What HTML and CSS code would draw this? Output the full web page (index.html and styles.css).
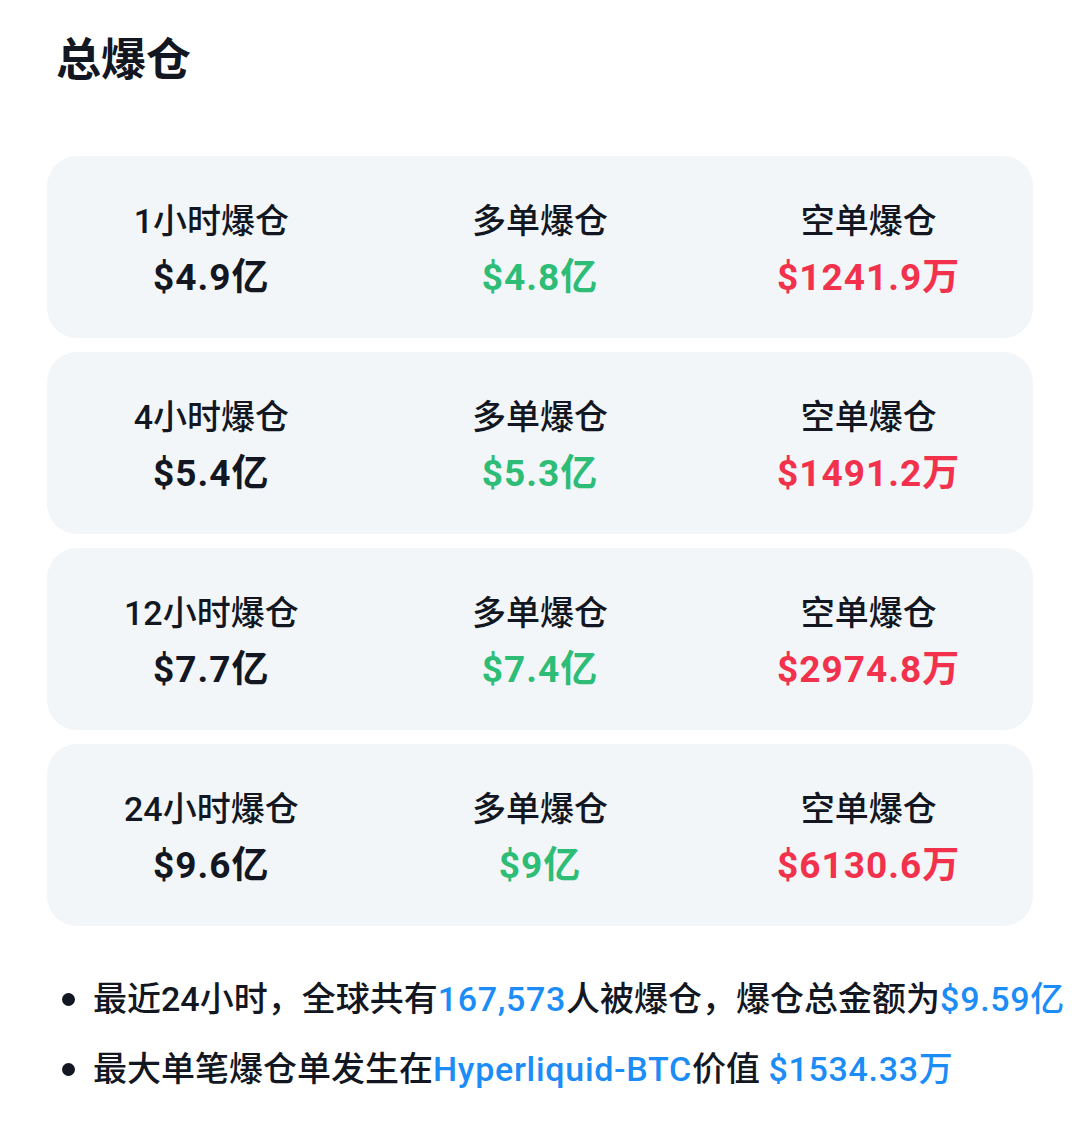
FILE: index.html
```html
<!DOCTYPE html>
<html lang="zh-CN">
<head>
    <meta charset="UTF-8">
    <meta name="viewport" content="width=device-width, initial-scale=1.0">
    <title>总爆仓</title>
    <link rel="stylesheet" href="styles.css">
</head>
<body>
    <div class="page">
        <h1 class="title">总爆仓</h1>

        <div class="cards">
            <div class="card">
                <div class="cell"><p class="label">1小时爆仓</p><p class="value">$4.9亿</p></div>
                <div class="cell"><p class="label">多单爆仓</p><p class="value long">$4.8亿</p></div>
                <div class="cell"><p class="label">空单爆仓</p><p class="value short">$1241.9万</p></div>
            </div>
            <div class="card">
                <div class="cell"><p class="label">4小时爆仓</p><p class="value">$5.4亿</p></div>
                <div class="cell"><p class="label">多单爆仓</p><p class="value long">$5.3亿</p></div>
                <div class="cell"><p class="label">空单爆仓</p><p class="value short">$1491.2万</p></div>
            </div>
            <div class="card">
                <div class="cell"><p class="label">12小时爆仓</p><p class="value">$7.7亿</p></div>
                <div class="cell"><p class="label">多单爆仓</p><p class="value long">$7.4亿</p></div>
                <div class="cell"><p class="label">空单爆仓</p><p class="value short">$2974.8万</p></div>
            </div>
            <div class="card">
                <div class="cell"><p class="label">24小时爆仓</p><p class="value">$9.6亿</p></div>
                <div class="cell"><p class="label">多单爆仓</p><p class="value long">$9亿</p></div>
                <div class="cell"><p class="label">空单爆仓</p><p class="value short">$6130.6万</p></div>
            </div>
        </div>

        <ul class="notes">
            <li>最近24小时，全球共有<span class="hl">167,573</span>人被爆仓，爆仓总金额为<span class="hl">$9.59亿</span></li>
            <li>最大单笔爆仓单发生在<span class="hl">Hyperliquid-BTC</span>价值 <span class="hl">$1534.33万</span></li>
        </ul>
    </div>
</body>
</html>
```

FILE: styles.css
```css
body { margin: 0; background: #fff; color: #121722; font-family: Roboto, "Noto Sans CJK SC", sans-serif; }
.page { padding: 35px 47px 0 47px; }
.title { font-size: 45px; font-weight: 700; margin: 0 0 69px 9px; line-height: 52px; }
.cards { display: flex; flex-direction: column; gap: 14px; }
.card { height: 182px; background: #f3f6f9; border-radius: 30px; display: grid; grid-template-columns: 1fr 1fr 1fr; align-items: center; }
.cell { text-align: center; padding-top: 6px; }
.label { font-size: 34px; font-weight: 500; margin: 0; line-height: 44px; }
.value { font-size: 37px; font-weight: 700; margin: 12px 0 0; line-height: 46px; letter-spacing: 1px; }
.long { color: #2ebd76; }
.short { color: #f2324c; }
.notes { list-style: none; margin: 38px 0 0; padding: 0; white-space: nowrap; }
.notes li { font-size: 34px; font-weight: 500; line-height: 70px; position: relative; padding-left: 46px; }
.notes li::before { content: ""; position: absolute; left: 15px; top: 29px; width: 13px; height: 13px; border-radius: 50%; background: #121722; }
.hl { color: #1c8cf7; letter-spacing: 0.7px; }
```
